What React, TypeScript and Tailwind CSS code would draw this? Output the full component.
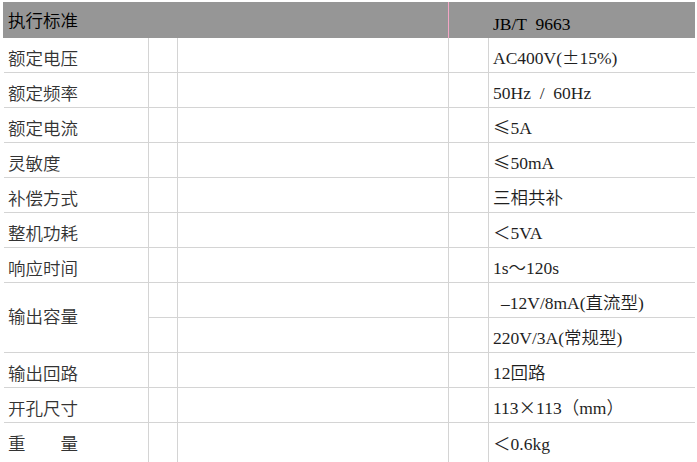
import React from "react";

const cjk = { fontFamily: '"Noto Sans CJK SC", sans-serif' };

function W({ children }: { children: React.ReactNode }) {
  return <span className="font-['Noto_Sans_CJK_SC',sans-serif]">{children}</span>;
}

const valFont =
  "font-['Liberation_Serif','Noto_Sans_CJK_SC',serif] font-[350] text-[17.5px] leading-[20px] text-[#1f1f1f] whitespace-pre";
const labFont =
  "font-['Noto_Sans_CJK_SC',sans-serif] font-[350] text-[17.5px] leading-[20px] text-[#333333] whitespace-pre";

function Row({ label, value, last }: { label: React.ReactNode; value: React.ReactNode; last?: boolean }) {
  const align = last ? "items-start pt-[10px]" : "items-end pb-[4px]";
  return (
    <div className={`flex ${last ? "h-[40px]" : "h-[35px] border-b border-[#d4d4d4]"}`}>
      <div className={`flex w-[145px] shrink-0 border-r border-[#d4d4d4] pl-[4px] ${align}`}>
        <span className={labFont}>{label}</span>
      </div>
      <div className="w-[29px] shrink-0 border-r border-[#d4d4d4]" />
      <div className="w-[271px] shrink-0 border-r border-[#d4d4d4]" />
      <div className="w-[40px] shrink-0 border-r border-[#d4d4d4]" />
      <div className={`flex flex-1 pl-[4px] ${align}`}>
        <span className={valFont}>{value}</span>
      </div>
    </div>
  );
}

function SubRow({ value, border }: { value: React.ReactNode; border?: boolean }) {
  return (
    <div className={`flex ${border ? "h-[35px] border-b border-[#d4d4d4]" : "h-[34px]"}`}>
      <div className="w-[29px] shrink-0 border-r border-[#d4d4d4]" />
      <div className="w-[271px] shrink-0 border-r border-[#d4d4d4]" />
      <div className="w-[40px] shrink-0 border-r border-[#d4d4d4]" />
      <div className="flex flex-1 items-end pb-[4px] pl-[4px]">
        <span className={valFont}>{value}</span>
      </div>
    </div>
  );
}

export default function App() {
  return (
    <div className="h-[462px] w-[697px] overflow-hidden bg-white pl-[3px] pt-[2px]">
      <div className="flex h-[36px] w-[692px] bg-[#969696]">
        <div className="flex w-[446px] shrink-0 items-center border-r border-[#f4a6c6] pl-[5px]">
          <span className="font-['Noto_Sans_CJK_SC',sans-serif] font-[350] text-[17.5px] leading-[20px] text-black">
            执行标准
          </span>
        </div>
        <div className="flex flex-1 items-end pb-[4px] pl-[44px]">
          <span className={`${valFont} !text-black`}>{"JB/T  9663"}</span>
        </div>
      </div>
      <div className="ml-px w-[691px]">
        <Row label="额定电压" value={<>AC400V(<W>±</W>15%)</>} />
        <Row label="额定频率" value={"50Hz  /  60Hz"} />
        <Row label="额定电流" value={<><W>≤</W>5A</>} />
        <Row label="灵敏度" value={<><W>≤</W>50mA</>} />
        <Row label="补偿方式" value="三相共补" />
        <Row label="整机功耗" value={<><W>＜</W>5VA</>} />
        <Row label="响应时间" value={<>1s<W>～</W>120s</>} />
        <div className="flex h-[70px] border-b border-[#d4d4d4]">
          <div className="flex w-[145px] shrink-0 items-center border-r border-[#d4d4d4] pb-[3px] pl-[4px]">
            <span className={labFont}>输出容量</span>
          </div>
          <div className="flex flex-1 flex-col">
            <SubRow border value={<span className="pl-[8px]">–12V/8mA(直流型)</span>} />
            <SubRow value="220V/3A(常规型)" />
          </div>
        </div>
        <Row label="输出回路" value="12回路" />
        <Row label="开孔尺寸" value={<>113<W>×</W>113<W>（</W>mm<W>）</W></>} />
        <Row
          last
          label={
            <span className="flex w-[70px] justify-between" style={cjk}>
              <span>重</span>
              <span>量</span>
            </span>
          }
          value={<><W>＜</W>0.6kg</>}
        />
      </div>
    </div>
  );
}
